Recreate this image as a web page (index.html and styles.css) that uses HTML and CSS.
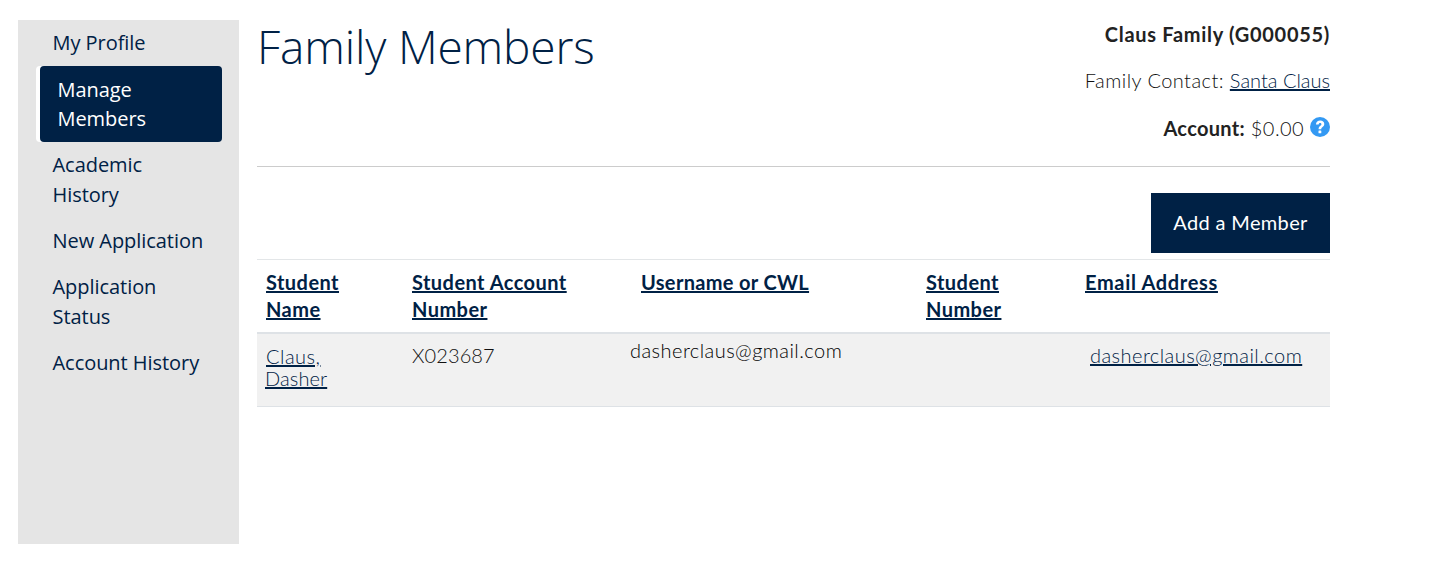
FILE: index.html
```html
<!DOCTYPE html>
<html lang="en">
<head>
<meta charset="utf-8">
<title>Family Members</title>
<link rel="stylesheet" href="styles.css">
</head>
<body>
<div class="page">
  <nav class="sidebar">
    <a class="nav-item" href="#">My Profile</a>
    <a class="nav-item active" href="#">Manage Members</a>
    <a class="nav-item" href="#">Academic History</a>
    <a class="nav-item" href="#">New Application</a>
    <a class="nav-item" href="#">Application Status</a>
    <a class="nav-item" href="#">Account History</a>
  </nav>
  <main class="content">
    <header class="head">
      <h1>Family Members</h1>
      <div class="info">
        <p class="family"><strong>Claus Family (G000055)</strong></p>
        <p class="contact">Family Contact: <a href="#">Santa Claus</a></p>
        <p class="account"><strong>Account:</strong> $0.00
          <svg class="help" viewBox="0 0 20 20" aria-hidden="true"><circle cx="10" cy="10" r="10" fill="#3399f3"/><path d="M5.9 7.5C6.1 5 7.8 3.6 10.2 3.6c2.4 0 4.1 1.4 4.1 3.5 0 1.6-.9 2.4-2 3.2-.8.6-1 .9-1 1.7v.3H8.6v-.6c0-1.3.5-2.1 1.5-2.8.8-.6 1.3-1 1.3-1.7 0-.8-.5-1.3-1.3-1.3-.9 0-1.4.6-1.5 1.5z" fill="#fff"/><rect x="8.5" y="13.4" width="2.8" height="2.8" rx=".5" fill="#fff"/></svg>
        </p>
      </div>
    </header>
    <div class="actions"><a class="btn" href="#">Add a Member</a></div>
    <table class="members">
      <colgroup><col class="c1"><col class="c2"><col class="c3"><col class="c4"><col class="c5"></colgroup>
      <thead>
        <tr>
          <th class="name-col"><a href="#">Student Name</a></th>
          <th><a href="#">Student Account Number</a></th>
          <th class="th-user"><a href="#">Username or CWL</a></th>
          <th><a href="#">Student Number</a></th>
          <th class="th-email"><a href="#">Email Address</a></th>
        </tr>
      </thead>
      <tbody>
        <tr>
          <td class="name-col td-name"><a href="#">Claus, <span class="last">Dasher</span></a></td>
          <td>X023687</td>
          <td class="td-user">dasherclaus@gmail.com</td>
          <td></td>
          <td class="td-email"><a href="#">dasherclaus@gmail.com</a></td>
        </tr>
      </tbody>
    </table>
  </main>
</div>
</body>
</html>
```

FILE: styles.css
```css
* { box-sizing: border-box; }
html, body { margin: 0; height: 100%; background: #fff; }
body { font-family: "Open Sans", "Liberation Sans", sans-serif; color: #222; overflow: hidden; }
a { color: #002145; }

.page { display: flex; align-items: flex-start; padding: 20px 0 0 18px; gap: 18px; }

.sidebar { width: 221px; height: 524px; background: #e5e5e5; padding: 8px 17px 0 18px; flex: none; }
.nav-item { display: block; font-size: 20px; line-height: 30px; letter-spacing: -0.05px; color: #002145; text-decoration: none; padding: 0 15px 16px 16.5px; }
.nav-item.active { margin: -8px 0 8px 4px; background: #002145; color: #fff; line-height: 29px; padding: 9px 20px 9px 17.5px; border-radius: 4px; box-shadow: -4px 0 0 #fff; }

.content { width: 1073px; flex: none; font-family: Lato, "Open Sans", sans-serif; }
.head { display: flex; justify-content: space-between; height: 147px; border-bottom: 1px solid #ccc; }
h1 { margin: 0; font-family: "Open Sans", sans-serif; font-weight: 300; font-size: 46px; line-height: 52px; letter-spacing: -0.15px; color: #002145; }
.info { text-align: right; font-size: 20px; line-height: 28px; font-weight: 300; letter-spacing: 0.45px; color: #111; }
.info p { margin: 0; }
.info .family { margin-bottom: 18px; }
.info .contact { margin-bottom: 20px; }
.info strong { font-weight: 700; letter-spacing: 0.7px; color: #222; }
.info .account strong { letter-spacing: 0.3px; }
.info a { color: #002145; letter-spacing: 0; }
.help { width: 20px; height: 20px; vertical-align: -1px; }

.actions { display: flex; justify-content: flex-end; padding-top: 26px; }
.btn { display: block; width: 179px; height: 60px; line-height: 59px; text-align: center; background: #002145; color: #fff; text-decoration: none; font-size: 20px; letter-spacing: 0.35px; }

.members { width: 1073px; margin-top: 6px; border-collapse: collapse; table-layout: fixed; border-top: 1px solid #e3e6e8; font-size: 20px; }
.c1 { width: 146px; } .c2 { width: 218px; } .c3 { width: 296px; } .c4 { width: 159px; } .c5 { width: 254px; }
th { text-align: left; vertical-align: top; padding: 9px; line-height: 27px; border-bottom: 2px solid #dee2e6; font-weight: 700; letter-spacing: 0.45px; }
th.name-col { padding-right: 40px; }
.th-user { padding-left: 20px; letter-spacing: 0.33px; }
.th-email { letter-spacing: 0.67px; }
td { vertical-align: top; padding: 9px; line-height: 25px; background: #f1f1f1; border-bottom: 1px solid #dee2e6; height: 73px; font-weight: 300; letter-spacing: 0.1px; color: #111; }
td.td-name { padding: 11px 60px 0 9px; line-height: 22px; letter-spacing: 0.5px; }
.last { margin-left: -1px; letter-spacing: 0.1px; }
td.td-user { padding-top: 4px; color: #000; letter-spacing: 0.45px; }
.td-email { padding-left: 14px; letter-spacing: 0.45px; }
```
